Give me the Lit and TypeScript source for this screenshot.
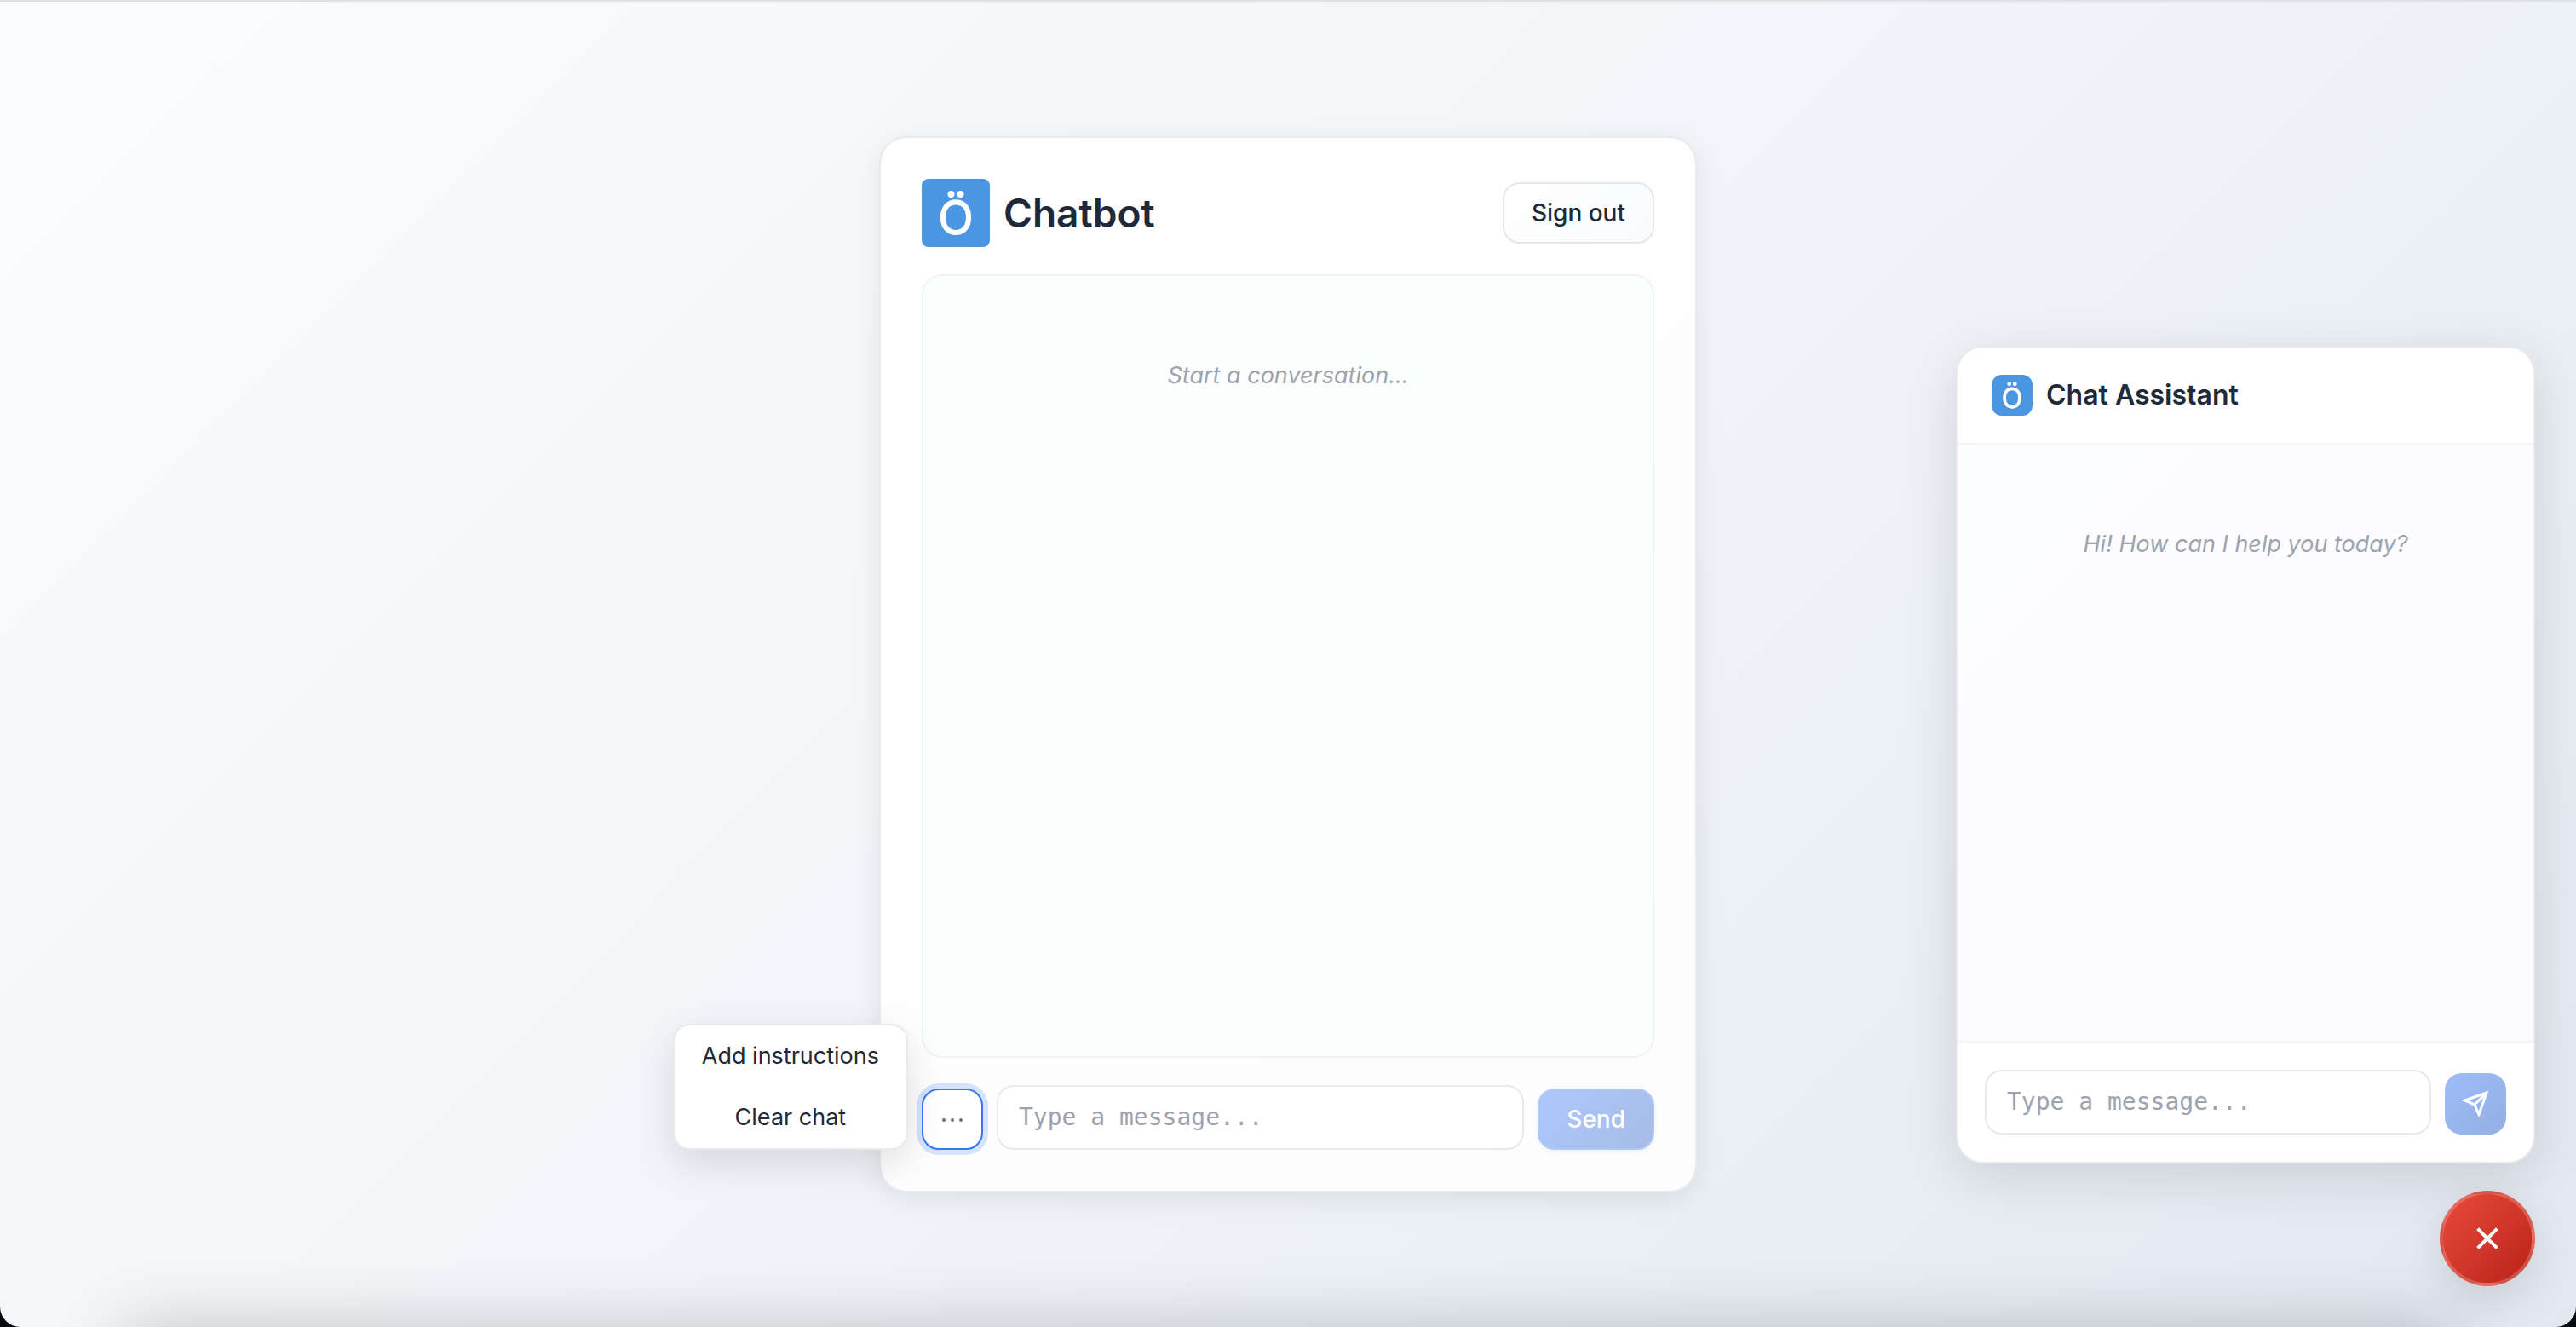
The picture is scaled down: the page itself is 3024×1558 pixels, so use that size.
import { LitElement, html, css, svg } from "lit";
import { customElement, property, state } from "lit/decorators.js";

const logo = svg`
  <path
    d="M40 27.3C49 27.3 55 34 55 45.2S49 63 40 63 25 56.4 25 45.2 31 27.3 40 27.3Z"
    fill="none"
    stroke="#fff"
    stroke-width="6.2"
  ></path>
  <circle cx="34.5" cy="18" r="4" fill="#fff"></circle>
  <circle cx="45.5" cy="18" r="4" fill="#fff"></circle>
`;

const controls = css`
  *,
  *::before,
  *::after {
    box-sizing: border-box;
  }
  button,
  textarea {
    margin: 0;
    font: inherit;
    font-size: 28px;
    line-height: 36px;
    border-radius: 20px;
  }
  button {
    cursor: pointer;
  }
  button:disabled {
    cursor: not-allowed;
  }
  textarea {
    display: block;
    flex: 1;
    min-width: 0;
    height: 76px;
    padding: 16px 24px;
    resize: none;
    overflow: hidden;
    outline: none;
    border: 2px solid #e9e9eb;
    background: #fff;
    color: #1f2937;
    font-family: "DejaVu Sans Mono", monospace;
    line-height: 40px;
  }
  textarea::placeholder {
    color: #9ca3af;
    opacity: 1;
  }
  .empty {
    margin: 0;
    padding: 96px 32px 0;
    text-align: center;
    font-style: italic;
    font-size: 27px;
    line-height: 42px;
    color: #9ca3af;
  }
`;

@customElement("brand-logo")
export class BrandLogo extends LitElement {
  static styles = css`
    :host {
      display: block;
      overflow: hidden;
      background: #4a96e3;
    }
    svg {
      display: block;
      width: 100%;
      height: 100%;
    }
  `;
  render() {
    return html`<svg viewBox="0 0 80 80" role="img" aria-label="Ö">${logo}</svg>`;
  }
}

@customElement("chat-card")
export class ChatCard extends LitElement {
  @state() private draft = "";
  @state() private menuOpen = true;

  static styles = [
    controls,
    css`
      :host {
        display: flex;
        flex-direction: column;
        gap: 32px;
        width: 100%;
        max-width: 960px;
        padding: 48px;
        border: 2px solid #e9eaeb;
        border-radius: 32px;
        background: linear-gradient(135deg, #fff, #fdfdfe);
        background-clip: padding-box;
        box-shadow: 0 8px 32px rgba(0, 0, 0, 0.08);
        box-sizing: border-box;
      }
      .header,
      .brand {
        display: flex;
        align-items: center;
        gap: 16px;
      }
      .header {
        justify-content: space-between;
      }
      brand-logo {
        width: 80px;
        height: 80px;
        border-radius: 8px;
      }
      h1 {
        margin: 0;
        font-size: 46px;
        line-height: 56px;
        font-weight: 600;
      }
      .sign-out {
        padding: 16px 32px;
        border: 2px solid #e5e7e9;
        background: linear-gradient(135deg, #fff, #f8fafc);
        color: #1f2937;
        font-weight: 500;
      }
      .messages {
        flex: 1;
        border: 2px solid #f0f3f3;
        border-radius: 24px;
        background: #fcfefd;
      }
      form {
        display: flex;
        align-items: flex-end;
        gap: 16px;
      }
      .menu-anchor {
        position: relative;
        display: flex;
      }
      .more {
        width: 72px;
        height: 72px;
        padding: 0;
        border: 2px solid #3478f6;
        background: #fff;
        color: #6b7280;
        box-shadow: 0 0 0 6px rgba(52, 120, 246, 0.2);
        outline: none;
        display: grid;
        place-items: center;
      }
      .more svg {
        display: block;
        width: 28px;
        height: 28px;
      }
      .menu {
        position: absolute;
        right: calc(100% + 16px);
        bottom: 0;
        display: flex;
        flex-direction: column;
        border: 2px solid #e9eaeb;
        border-radius: 20px;
        overflow: hidden;
        background: #fff;
        box-shadow: 0 16px 48px rgba(0, 0, 0, 0.12);
      }
      .menu button {
        padding: 18px 32px;
        border: 0;
        border-radius: 0;
        background: none;
        color: #1f2937;
        font-size: 27px;
        white-space: nowrap;
      }
      .send {
        padding: 16px 32px;
        height: 72px;
        border: 2px solid #adc8fb;
        background: linear-gradient(135deg, #adc8fd, #a7bce6);
        color: #fff;
        font-weight: 500;
        box-shadow: 0 2px 6px rgba(0, 0, 0, 0.06);
      }
    `,
  ];

  render() {
    return html`
      <header class="header">
        <div class="brand">
          <brand-logo></brand-logo>
          <h1>Chatbot</h1>
        </div>
        <button class="sign-out" type="button">Sign out</button>
      </header>
      <section class="messages" aria-label="Messages">
        <p class="empty">Start a conversation...</p>
      </section>
      <form @submit=${(e: Event) => e.preventDefault()}>
        <div class="menu-anchor">
          <button
            class="more"
            type="button"
            aria-label="More options"
            aria-expanded=${this.menuOpen}
            @click=${() => (this.menuOpen = !this.menuOpen)}
          >
            <svg viewBox="0 0 28 28" fill="currentColor" aria-hidden="true">
              <circle cx="4" cy="15" r="2"></circle>
              <circle cx="14" cy="15" r="2"></circle>
              <circle cx="24" cy="15" r="2"></circle>
            </svg>
          </button>
          ${this.menuOpen
            ? html`<div class="menu">
                <button type="button">Add instructions</button>
                <button type="button">Clear chat</button>
              </div>`
            : null}
        </div>
        <textarea
          rows="1"
          aria-label="Message"
          placeholder="Type a message..."
          .value=${this.draft}
          @input=${(e: Event) => (this.draft = (e.target as HTMLTextAreaElement).value)}
        ></textarea>
        <button class="send" type="submit" ?disabled=${!this.draft.trim()}>Send</button>
      </form>
    `;
  }
}

@customElement("chat-widget")
export class ChatWidget extends LitElement {
  @property() heading = "Chat Assistant";
  @state() private draft = "";

  static styles = [
    controls,
    css`
      :host {
        display: flex;
        flex-direction: column;
        overflow: hidden;
        border: 2px solid #e9e9eb;
        border-radius: 32px;
        background: #fff;
        box-shadow: 0 16px 64px rgba(0, 0, 0, 0.12);
        box-sizing: border-box;
      }
      .header {
        display: flex;
        align-items: center;
        gap: 16px;
        padding: 32px 40px;
        border-bottom: 2px solid #f3f4f5;
      }
      brand-logo {
        width: 48px;
        height: 48px;
        border-radius: 12px;
      }
      h2 {
        margin: 0;
        font-size: 32px;
        line-height: 40px;
        font-weight: 600;
      }
      .messages {
        flex: 1;
        background: linear-gradient(135deg, #fbfdff, #fcfcfe 30%);
      }
      form {
        display: flex;
        align-items: flex-end;
        gap: 16px;
        padding: 32px;
        border-top: 2px solid #f3f4f5;
      }
      .send {
        display: grid;
        place-items: center;
        width: 72px;
        height: 72px;
        padding: 0;
        border: 0;
        background: linear-gradient(135deg, #9dbdfb, #93afe1);
        color: #fff;
      }
      svg {
        width: 32px;
        height: 32px;
        overflow: visible;
        fill: none;
        stroke: currentColor;
        stroke-width: 3;
      }
    `,
  ];

  render() {
    return html`
      <header class="header">
        <brand-logo></brand-logo>
        <h2>${this.heading}</h2>
      </header>
      <section class="messages" aria-label="Messages">
        <p class="empty">Hi! How can I help you today?</p>
      </section>
      <form @submit=${(e: Event) => e.preventDefault()}>
        <textarea
          rows="1"
          aria-label="Message"
          placeholder="Type a message..."
          .value=${this.draft}
          @input=${(e: Event) => (this.draft = (e.target as HTMLTextAreaElement).value)}
        ></textarea>
        <button class="send" type="submit" aria-label="Send" ?disabled=${!this.draft.trim()}>
          <svg viewBox="0 0 32 32" aria-hidden="true">
            <path d="M29 3 15 17"></path>
            <path d="M29 3 20 28.5 15 17 3.5 12Z"></path>
          </svg>
        </button>
      </form>
    `;
  }
}

@customElement("app-root")
export class AppRoot extends LitElement {
  @state() private widgetOpen = true;

  static styles = css`
    :host {
      display: block;
      background: #05070f;
      color: #1f2937;
      font-family: Inter, "Liberation Sans", sans-serif;
    }
    * {
      box-sizing: border-box;
    }
    .page {
      position: relative;
      display: grid;
      place-items: center;
      min-height: 100vh;
      overflow: hidden;
      padding: 48px;
      border-top: 2px solid #dfe2e5;
      border-radius: 0 0 24px 24px;
      background: linear-gradient(135deg, #fafcfd 0%, #f1f5f9 50%, #e2e8f0 100%);
    }
    .page::after {
      content: "";
      position: absolute;
      top: 100%;
      left: 144px;
      right: 144px;
      height: 100px;
      box-shadow: 0 0 80px 0 rgba(0, 0, 0, 0.2);
      pointer-events: none;
    }
    chat-card {
      min-height: 1240px;
    }
    .dock {
      position: absolute;
      right: 48px;
      bottom: 48px;
      display: flex;
      flex-direction: column;
      align-items: flex-end;
      gap: 32px;
    }
    chat-widget {
      width: 680px;
      height: 960px;
    }
    .toggle {
      display: grid;
      place-items: center;
      width: 112px;
      height: 112px;
      padding: 0;
      border: 4px solid rgba(255, 255, 255, 0.2);
      border-radius: 50%;
      background: linear-gradient(135deg, #ea4b3c, #b92318);
      color: #fff;
      box-shadow: 0 16px 48px rgba(0, 0, 0, 0.12);
      cursor: pointer;
    }
    .toggle svg {
      width: 48px;
      height: 48px;
      stroke: currentColor;
      stroke-width: 2;
    }
  `;

  render() {
    return html`
      <main class="page">
        <chat-card></chat-card>
        <aside class="dock">
          ${this.widgetOpen ? html`<chat-widget></chat-widget>` : null}
          <button
            class="toggle"
            type="button"
            aria-label=${this.widgetOpen ? "Close chat" : "Open chat"}
            @click=${() => (this.widgetOpen = !this.widgetOpen)}
          >
            <svg viewBox="0 0 24 24" fill="none" aria-hidden="true">
              <path d="M6.3 6.3 17.7 17.7M17.7 6.3 6.3 17.7"></path>
            </svg>
          </button>
        </aside>
      </main>
    `;
  }
}
